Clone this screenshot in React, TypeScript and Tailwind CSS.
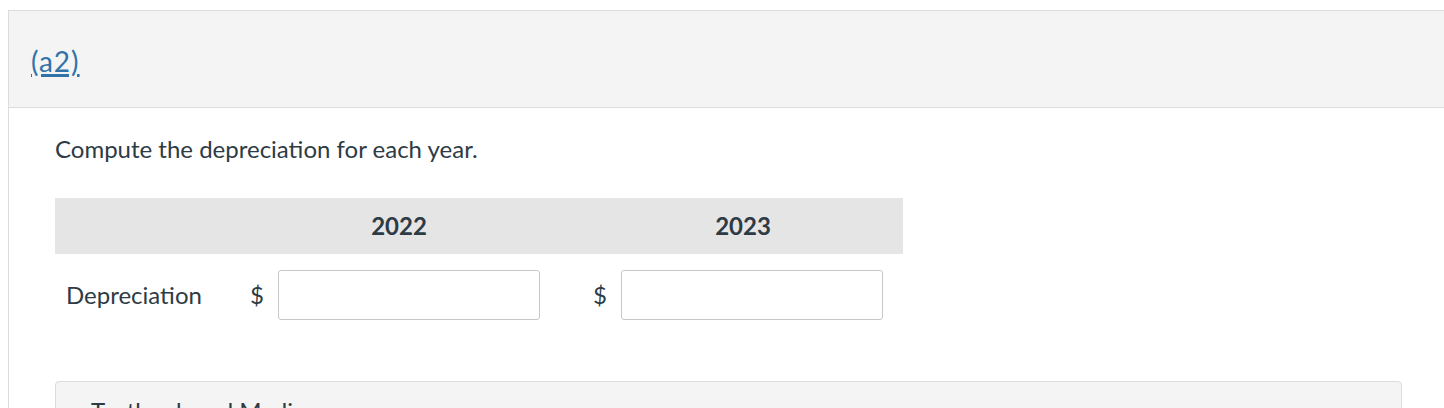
import React from "react";

const font = { fontFamily: "Lato, 'Open Sans', sans-serif" };

const AmountCell = ({ pad }: { pad: string }) => (
  <div className={`flex items-center justify-end gap-[14px] ${pad}`}>
    <span className="text-[24px] text-[#2d3b45]">$</span>
    <input
      type="text"
      className="w-[262px] h-[50px] border border-[#c7c7c7] rounded-[3px] bg-white outline-none"
    />
  </div>
);

export default function App() {
  return (
    <div className="bg-white w-[1444px] h-[408px] overflow-hidden pl-[8px] pt-[10px]" style={font}>
      <div className="w-[1480px] border-l border-t border-[#dcdcdc] bg-white">
        <div className="h-[97px] bg-[#f4f4f4] border-b border-[#dcdcdc] flex items-center pl-[22px]">
          <a className="text-[28px] tracking-[1px] text-[#2f73a8] leading-none pt-[4px] underline decoration-[3px] underline-offset-[2px]">
            (a2)
          </a>
        </div>
        <div className="pl-[46px] pt-[26px]">
          <p className="text-[24px] leading-[30px] text-[#2d3b45]">Compute the depreciation for each year.</p>
          <div className="mt-[34px] w-[848px]">
            <div className="flex h-[56px] bg-[#e5e5e5] items-center font-bold text-[24px] text-[#2d3b45]">
              <div className="w-[172px]" />
              <div className="w-[344px] text-center">2022</div>
              <div className="w-[332px] text-center pl-[12px]">2023</div>
            </div>
            <div className="flex items-center pt-[16px]">
              <div className="w-[172px] pl-[11px] text-[24px] text-[#2d3b45]">Depreciation</div>
              <div className="w-[344px]">
                <AmountCell pad="pr-[31px]" />
              </div>
              <div className="w-[332px]">
                <AmountCell pad="pr-[20px]" />
              </div>
            </div>
          </div>
          <div className="mt-[61px] w-[1347px] h-[60px] bg-[#f4f4f4] border border-[#dcdcdc] rounded-t-[4px] pl-[35px] pt-[17px]">
            <span className="text-[24px] leading-[24px] text-[#2d3b45]">Textbook and Media</span>
          </div>
        </div>
      </div>
    </div>
  );
}
